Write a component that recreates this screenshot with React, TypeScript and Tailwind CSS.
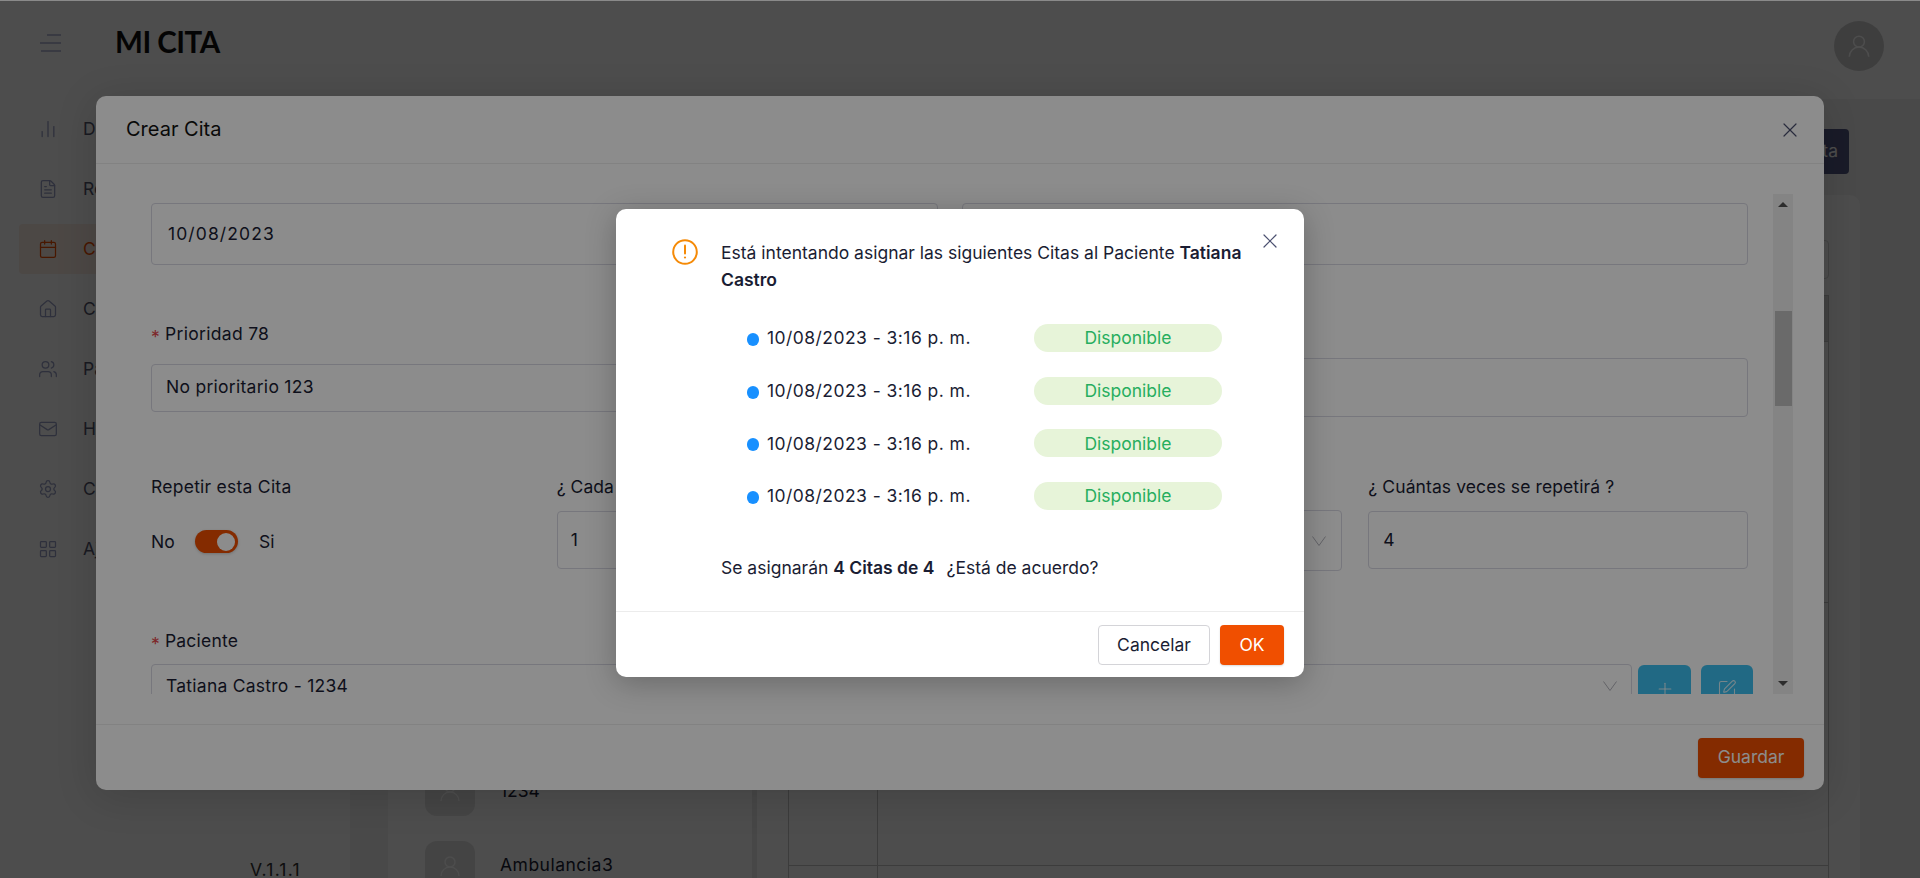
import { ChartNoAxesColumn, FileText, Calendar, House, Users, Mail, Settings, LayoutGrid, X, Plus, SquarePen } from "lucide-react";

const nav = [
  { label: "Dashboard", Icon: ChartNoAxesColumn },
  { label: "Reportes", Icon: FileText },
  { label: "Citas", Icon: Calendar, active: true },
  { label: "Consultorios", Icon: House },
  { label: "Pacientes", Icon: Users },
  { label: "Historial", Icon: Mail },
  { label: "Configuración", Icon: Settings },
  { label: "Ajustes", Icon: LayoutGrid },
];

function Person({ className }: { className: string }) {
  return (
    <svg viewBox="0 0 24 24" fill="none" stroke="currentColor" strokeWidth="1.4" className={className}>
      <circle cx="12" cy="8" r="5" />
      <path d="M3 22c0-5 4-9 9-9s9 4 9 9" />
    </svg>
  );
}

function Chevron() {
  return (
    <svg viewBox="0 0 14 10" fill="none" stroke="#b4b4bc" strokeWidth="1" className="h-[10px] w-[14px] shrink-0">
      <path d="M0.5 0.5 7 9.5 13.5 0.5" />
    </svg>
  );
}

function Req() {
  return <span className="mr-[5px] align-[-3px] text-[#e5484d]">*</span>;
}

function Field({ children, className }: { children?: React.ReactNode; className: string }) {
  return <div className={`flex items-center rounded-[4px] border border-[#d9d9e3] text-[17.5px] text-[#1a1d33] ${className}`}>{children}</div>;
}

export default function App() {
  return (
    <div className="relative h-[878px] w-full overflow-hidden bg-white font-['Inter',sans-serif] text-[#1a1d33]">
      <div className="absolute left-0 right-0 top-0 z-10 h-px bg-[#8a8a8a]" />
      <header className="flex h-[99px] items-center bg-white pb-[14px] pl-[40px] pr-[36px]">
        <svg viewBox="0 0 21 18" fill="none" stroke="#a8aecf" strokeWidth="1.5" className="h-[18px] w-[21px]">
          <path d="M7 1h14M0 9h21M1 17h20" />
        </svg>
        <h1 className="ml-[54px] font-['Lato',sans-serif] text-[29.5px] font-bold tracking-[-0.5px] text-[#111]">MI CITA</h1>
        <div className="ml-auto mt-[7px] flex h-[50px] w-[50px] items-center justify-center rounded-full bg-[#cfcfcf]">
          <Person className="h-[26px] w-[26px] text-white" />
        </div>
      </header>
      <div className="flex h-[779px]">
        <aside className="flex w-[350px] shrink-0 flex-col bg-white px-[19px] pt-[5px]">
          {nav.map(({ label, Icon, active }) => (
            <div key={label} className={`mb-[10px] flex h-[50px] shrink-0 items-center gap-[25px] rounded-[4px] pl-[19px] text-[17.5px] ${active ? "bg-[#fdeee6] text-[#f04f00]" : "text-[#555870]"}`}>
              <Icon className={`h-[20px] w-[20px] ${active ? "" : "text-[#9aa0c6]"}`} strokeWidth={1.5} />
              <span>{label}</span>
            </div>
          ))}
          <div className="mb-[-5px] mt-auto pl-[231px] text-[17.5px] tracking-[1.2px] text-[#333]">V.1.1.1</div>
        </aside>
        <main className="flex min-w-0 flex-1 bg-[#f5f5f5] pl-[38px] pr-[60px] pt-[30px]">
          <div className="flex min-w-0 flex-1 flex-col">
            <div className="mr-[11px] flex justify-end">
              <button className="h-[45px] rounded-[4px] bg-[#555a85] px-[11px] text-[17.5px] text-white">Crear Cita</button>
            </div>
            <div className="mt-[21px] flex min-h-0 flex-1 overflow-hidden rounded-t-[10px] bg-white">
              <div className="flex w-[364px] shrink-0 flex-col gap-[25px] pl-[37px] pt-[571px]">
                <div className="flex h-[50px] shrink-0 items-center gap-[25px]">
                  <div className="flex h-[50px] w-[50px] items-center justify-center rounded-[12px] bg-[#e4e4e4]"><Person className="h-[24px] w-[24px] text-white" /></div>
                  <span className="text-[17.5px]">1234</span>
                </div>
                <div className="flex h-[50px] shrink-0 items-center gap-[25px]">
                  <div className="flex h-[50px] w-[50px] items-center justify-center rounded-[12px] bg-[#e4e4e4]"><Person className="h-[24px] w-[24px] text-white" /></div>
                  <span className="pb-[2px] text-[17.5px] tracking-[0.5px]">Ambulancia3</span>
                </div>
              </div>
              <div className="w-[5px] shrink-0 bg-[#ececec]" />
              <div className="ml-[31px] mr-[31px] flex min-w-0 flex-1 flex-col pt-[45px]">
                <div className="h-[39px] shrink-0 rounded-[4px] border border-[#d9d9d9]" />
                <div className="mt-[16px] flex h-[47px] shrink-0 border border-[#c6c6c6] bg-[#dcdcdc]" />
                <div className="flex h-[261px] shrink-0 border-x border-b border-[#c6c6c6]" />
                <div className="flex h-[263px] shrink-0 border-x border-b border-[#c6c6c6]">
                  <div className="w-[89px] border-r border-[#c6c6c6]" />
                </div>
                <div className="flex flex-1 border-x border-[#c6c6c6]">
                  <div className="w-[89px] border-r border-[#c6c6c6]" />
                </div>
              </div>
            </div>
          </div>
        </main>
      </div>

      {/* Modal Crear Cita */}
      <div className="absolute inset-0 bg-black/45">
        <div className="absolute left-[96px] top-[96px] flex h-[694px] w-[1728px] flex-col rounded-[10px] bg-white shadow-[0_6px_40px_rgba(0,0,0,0.15)]">
          <div className="flex h-[68px] shrink-0 items-center justify-between border-b border-[#ededed] pl-[30px] pr-[22px]">
            <span className="pb-[1px] text-[20px] text-[#111]">Crear Cita</span>
            <X className="h-[24px] w-[24px] text-[#4b5070]" strokeWidth={1.2} />
          </div>
          <div className="flex h-[561px] shrink-0 items-start border-b border-[#ededed] pl-[55px] pr-[31px] pt-[30px]">
            <div className="h-[500px] min-w-0 flex-1 overflow-hidden pt-[9px]">
              <div className="grid w-[1597px] grid-cols-2 gap-[24px]">
                <Field className="h-[62px] pl-[16px] tracking-[1.1px]">10/08/2023</Field>
                <Field className="h-[62px]" />
              </div>
              <div className="mt-[56px] grid w-[1597px] grid-cols-2 gap-[24px]">
                <div>
                  <div className="h-[24px] pt-[1px] text-[17.5px] leading-[24px] tracking-[0.3px]"><Req />Prioridad 78</div>
                  <Field className="mt-[19px] h-[48px] pb-[2px] pl-[14px] tracking-[0.28px]">No prioritario 123</Field>
                </div>
                <Field className="mt-[37px] h-[59px]" />
              </div>
              <div className="mt-[58px] grid w-[1597px] grid-cols-4 gap-[26px]">
                <div>
                  <div className="h-[24px] text-[17.5px] leading-[24px] tracking-[0.25px]">Repetir esta Cita</div>
                  <div className="mt-[24px] flex h-[48px] items-start pt-[7px] text-[17.5px] leading-[23px]">
                    <span className="w-[44px]">No</span>
                    <div className="flex h-[23px] w-[43px] items-center justify-end rounded-full bg-[#f04f00] pr-[3px] shadow-[0_1px_3px_rgba(0,0,0,0.2)]">
                      <div className="h-[18px] w-[18px] rounded-full bg-white" />
                    </div>
                    <span className="ml-[21px]">Si</span>
                  </div>
                </div>
                <div>
                  <div className="h-[24px] text-[17.5px] leading-[24px]">¿ Cada cuánto ?</div>
                  <Field className="mt-[12px] h-[58px] pl-[13px]">1</Field>
                </div>
                <div>
                  <div className="h-[24px]" />
                  <Field className="mt-[11px] h-[61px] justify-end pr-[15px]"><Chevron /></Field>
                </div>
                <div>
                  <div className="h-[24px] text-[17.5px] leading-[24px] tracking-[0.1px]">¿ Cuántas veces se repetirá ?</div>
                  <Field className="mt-[12px] h-[58px] pl-[14px]">4</Field>
                </div>
              </div>
              <div className="mt-[58px] h-[24px] text-[17.5px] leading-[24px] tracking-[0.2px]"><Req />Paciente</div>
              <div className="mt-[11px] flex items-start">
                <Field className="h-[50px] w-[1481px] justify-between pb-[6px] pl-[14px] pr-[14px]">
                  <span className="tracking-[0.25px]">Tatiana Castro - 1234</span>
                  <Chevron />
                </Field>
                <button className="ml-[6px] mt-[1px] flex h-[48px] w-[53px] items-center justify-center rounded-[6px] bg-[#3cc0f0] pb-[1px] text-white/80"><Plus className="h-[20px] w-[20px]" strokeWidth={1.3} /></button>
                <button className="ml-[10px] mt-[1px] flex h-[48px] w-[52px] items-center justify-center rounded-[6px] bg-[#3cc0f0] text-white/80"><SquarePen className="h-[20px] w-[20px]" strokeWidth={1.3} /></button>
              </div>
            </div>
            <div className="flex h-[500px] w-[20px] shrink-0 flex-col items-center bg-[#f1f1f1]">
              <div className="mt-[8px] h-0 w-0 border-x-[5px] border-b-[5px] border-x-transparent border-b-[#505050]" />
              <div className="mt-[104px] h-[95px] w-[17px] bg-[#c1c1c1]" />
              <div className="mb-[8px] mt-auto h-0 w-0 border-x-[5px] border-t-[5px] border-x-transparent border-t-[#505050]" />
            </div>
          </div>
          <div className="flex flex-1 items-center justify-end pr-[20px]">
            <button className="h-[40px] w-[106px] rounded-[4px] bg-[#f04f00] text-[17.5px] text-white shadow-[0_1px_2px_rgba(0,0,0,0.15)]">Guardar</button>
          </div>
        </div>

        {/* Dialog */}
        <div className="absolute inset-0 bg-black/45">
          <div className="absolute left-[616px] top-[209px] flex h-[468px] w-[688px] flex-col rounded-[10px] bg-white shadow-[0_6px_30px_rgba(0,0,0,0.25)]">
            <div className="relative flex h-[403px] shrink-0 border-b border-[#ececec] pl-[56px] pr-[56px] pt-[30px]">
              <svg viewBox="0 0 26 26" fill="none" className="h-[26px] w-[26px] shrink-0">
                <circle cx="13" cy="13" r="11.8" stroke="#f58a07" strokeWidth="2" />
                <path d="M13 6.5v8" stroke="#f58a07" strokeWidth="2" strokeLinecap="round" />
                <circle cx="13" cy="18.5" r="1.1" fill="#f58a07" />
              </svg>
              <div className="ml-[23px] min-w-0 flex-1 text-[17.5px]">
                <p className="leading-[27px]">Está intentando asignar las siguientes Citas al Paciente <b className="font-semibold">Tatiana Castro</b></p>
                <ul className="mt-[31px] flex flex-col gap-[24.7px] pl-[26px]">
                  {[0, 1, 2, 3].map((i) => (
                    <li key={i} className="flex h-[28px] items-center">
                      <span className="mt-[3px] h-[13px] w-[12px] shrink-0 rounded-full bg-[#1890ff]" />
                      <span className="ml-[8px] w-[267px] shrink-0 pt-[1px] tracking-[0.45px]">10/08/2023 - 3:16 p. m.</span>
                      <span className="flex h-[28px] w-[188px] items-center justify-center rounded-full bg-[#e7f4d9] pt-[1px] text-[#27ae5f]">Disponible</span>
                    </li>
                  ))}
                </ul>
                <p className="mt-[46px] leading-[24px]">Se asignarán <b className="font-semibold">4 Citas de 4</b><span className="ml-[12px]">¿Está de acuerdo?</span></p>
              </div>
              <X className="absolute right-[22px] top-[20px] h-[24px] w-[24px] text-[#4b5070]" strokeWidth={1.2} />
            </div>
            <div className="flex flex-1 items-start justify-end gap-[10px] pr-[20px] pt-[13px]">
              <button className="h-[40px] w-[112px] rounded-[4px] border border-[#d4d4d8] bg-white text-[17.5px] text-[#1a1d33]">Cancelar</button>
              <button className="h-[40px] w-[64px] rounded-[4px] bg-[#f04f00] text-[17.5px] text-white shadow-[0_1px_2px_rgba(0,0,0,0.15)]">OK</button>
            </div>
          </div>
        </div>
      </div>
    </div>
  );
}
